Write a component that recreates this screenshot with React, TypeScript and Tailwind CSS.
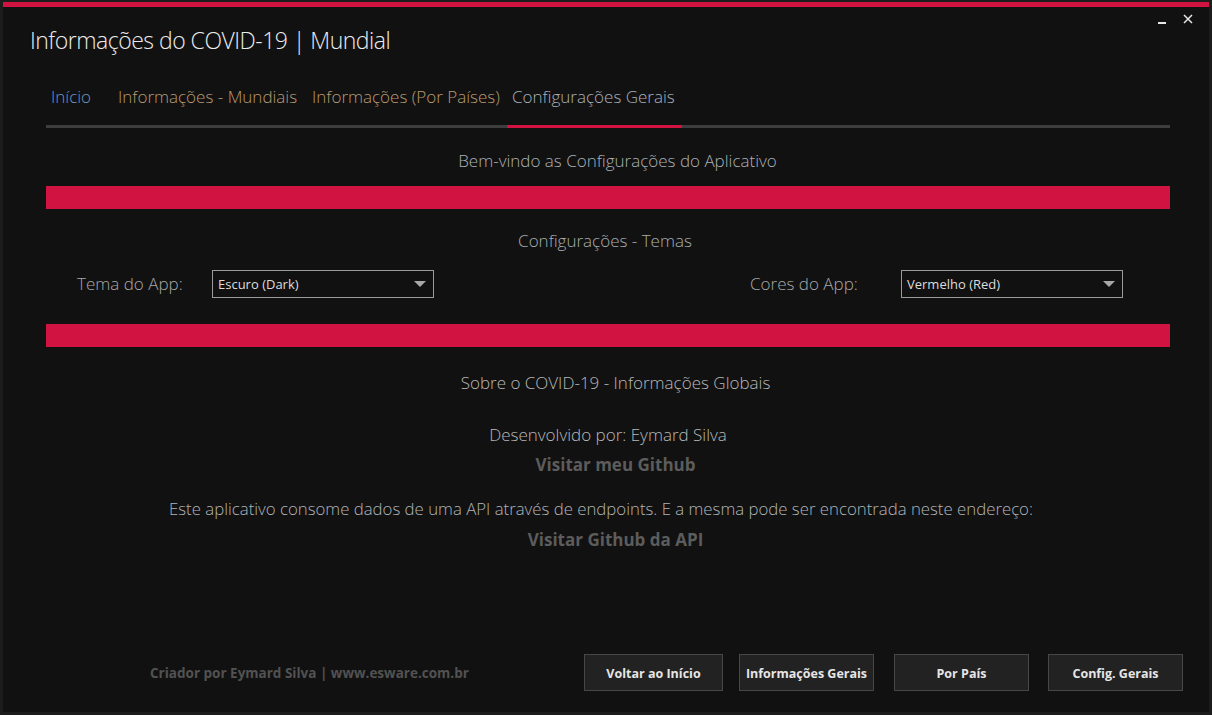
import React from "react";

const tabs = [
  { label: "Início", w: "w-[67px]", color: "text-[#6a98c2]", active: false },
  { label: "Informações - Mundiais", w: "w-[194px]", color: "text-[#b89a72]", active: false },
  { label: "Informações (Por Países)", w: "w-[200px]", color: "text-[#b89a72]", active: false },
  { label: "Configurações Gerais", w: "w-[175px]", color: "text-[#a9b0bb]", active: true },
];

function Select({ value }: { value: string }) {
  return (
    <div className="w-[222px] h-[28px] border border-[#9a9a9a] flex items-center justify-between pl-[5px] pr-[7px] pt-[2px]">
      <span className="text-[13px] text-[#dcdcdc] font-normal">{value}</span>
      <svg width="12" height="7" viewBox="0 0 12 7" className="-mt-[2px]">
        <polygon points="0,0 12,0 6,6" fill="#a8a8a8" />
      </svg>
    </div>
  );
}

const btn =
  "h-[37px] pt-[3px] bg-[#222222] border border-[#474747] text-[12.5px] font-bold text-[#e6e6e6] whitespace-nowrap";

export default function App() {
  return (
    <div className="w-[1212px] h-[715px] bg-[#1c1c1c] pt-[2px] pl-[3px] overflow-hidden font-['Open_Sans','Noto_Sans',sans-serif]">
      <div className="w-[1206px] h-[710px] bg-[#111111] flex flex-col">
        <div className="h-[5px] bg-[#d11342]" />
        <div className="h-[66px] flex justify-between">
          <div className="pl-[27px] flex items-center text-[23px] font-light text-[#ececec] tracking-[-0.5px] whitespace-nowrap">
            Informações do COVID-19 | Mundial
          </div>
          <div className="flex items-start pt-[6px] pr-[15px] gap-[15px]">
            <svg width="10" height="14" viewBox="0 0 10 14" className="mt-[1px]">
              <rect x="1" y="8" width="8" height="2" fill="#e8e8e8" />
            </svg>
            <svg width="12" height="14" viewBox="0 0 12 14">
              <path d="M2 2 L10 10 M10 2 L2 10" stroke="#e8e8e8" strokeWidth="1.5" />
            </svg>
          </div>
        </div>
        <div className="pl-[43px] pr-[39px] flex flex-col">
          <div className="flex w-[1124px]">
            {tabs.map((t) => (
              <div
                key={t.label}
                className={`${t.w} h-[55px] pt-[11px] pl-[5px] leading-[26px] text-[17px] font-light whitespace-nowrap border-b-[3px] ${t.color} ${t.active ? "border-[#d11342]" : "border-[#3d3d3d]"}`}
              >
                {t.label}
              </div>
            ))}
            <div className="flex-1 h-[55px] border-b-[3px] border-[#3d3d3d]" />
          </div>

          <div className="mt-[22px] h-[22px] leading-[22px] text-center text-[17px] font-light text-[#aab0b6] pl-[19px]">
            Bem-vindo as Configurações do Aplicativo
          </div>
          <div className="mt-[14px] h-[23px] bg-[#d11342]" />
          <div className="mt-[21px] h-[22px] leading-[22px] text-center text-[17px] font-light text-[#a8adb2] pr-[6px]">
            Configurações - Temas
          </div>
          <div className="mt-[18px] flex items-center h-[28px] pl-[31px]">
            <div className="w-[135px] text-[17px] font-light text-[#a8a8a8] whitespace-nowrap">Tema do App:</div>
            <Select value="Escuro (Dark)" />
            <div className="w-[316px]" />
            <div className="w-[151px] text-[17px] font-light text-[#a8a8a8] whitespace-nowrap">Cores do App:</div>
            <Select value="Vermelho (Red)" />
          </div>
          <div className="mt-[26px] h-[23px] bg-[#d11342]" />
          <div className="mt-[25px] h-[22px] leading-[22px] text-center text-[17px] font-light text-[#b8b8b8] pl-[15px]">
            Sobre o COVID-19 - Informações Globais
          </div>
          <div className="mt-[30px] h-[22px] leading-[22px] text-center text-[17px] font-light text-[#b8b8b8]">
            Desenvolvido por: Eymard Silva
          </div>
          <div className="mt-[8px] h-[22px] leading-[22px] text-center text-[17px] font-bold text-[#5c5c5c] pl-[15px]">
            Visitar meu Github
          </div>
          <div className="mt-[22px] h-[22px] leading-[22px] text-center text-[16.8px] font-light text-[#b0b4b8] pr-[14px] whitespace-nowrap">
            Este aplicativo consome dados de uma API através de endpoints. E a mesma pode ser encontrada neste endereço:
          </div>
          <div className="mt-[9px] h-[22px] leading-[22px] text-center text-[17px] font-bold text-[#5c5c5c] pl-[15px]">
            Visitar Github da API
          </div>
        </div>

        <div className="mt-auto pb-[21px] flex items-center">
          <div className="w-[581px] pl-[147px] pt-[2px] text-[13.5px] font-bold text-[#525252] whitespace-nowrap">
            Criador por Eymard Silva | www.esware.com.br
          </div>
          <button className={`w-[139px] ${btn}`}>Voltar ao Início</button>
          <button className={`ml-[16px] w-[135px] ${btn}`}>Informações Gerais</button>
          <button className={`ml-[20px] w-[135px] ${btn}`}>Por País</button>
          <button className={`ml-[19px] w-[135px] ${btn}`}>Config. Gerais</button>
        </div>
      </div>
    </div>
  );
}
